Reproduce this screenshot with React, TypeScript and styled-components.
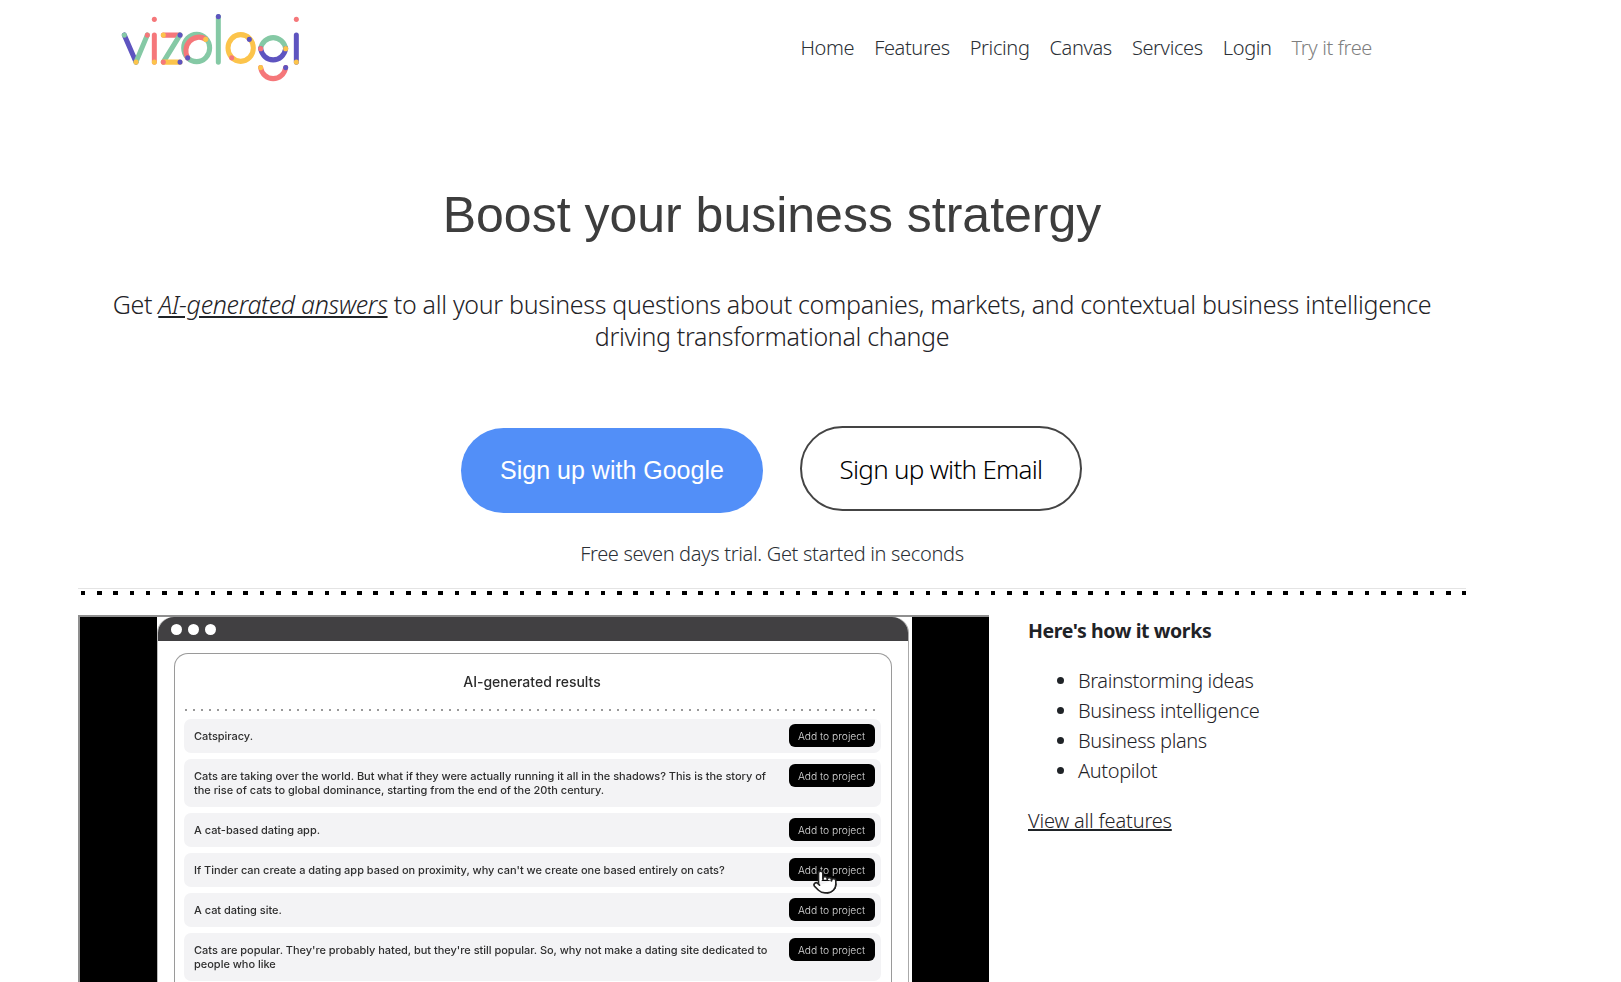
import React from "react";
import styled, { createGlobalStyle } from "styled-components";
import { Pointer } from "lucide-react";

const Global = createGlobalStyle`
  html, body { margin: 0; padding: 0; background: #fff; height: 100%; overflow: hidden; }
  body { font-family: "Noto Sans", "Open Sans", sans-serif; font-weight: 350; color: #1f2327; }
`;

const Page = styled.div`
  width: 1388px;
  margin-left: 78px;
  height: 982px;
  overflow: hidden;
  display: flex;
  flex-direction: column;
  & > * { flex: none; }
`;

const Header = styled.header`
  height: 96px;
  display: flex;
  align-items: flex-start;
  justify-content: space-between;
`;

const LogoMark = styled.svg`
  width: 220px;
  height: 105px;
  margin: -1px 0 0 22px;
  flex: none;
  filter: blur(0.4px);
`;

const Nav = styled.nav`
  display: flex;
  gap: 20px;
  margin: 34px 94px 0 0;
`;

const NavLink = styled.a<{ $muted?: boolean }>`
  font-size: 20px;
  line-height: 28px;
  letter-spacing: -0.37px;
  color: ${(p) => (p.$muted ? "#7f7f7f" : "#2b3036")};
`;

const Hero = styled.section`
  display: flex;
  flex-direction: column;
  align-items: center;
  text-align: center;
`;

const Title = styled.h1`
  margin: 90px 0 0;
  font-family: "Liberation Sans", Arial, sans-serif;
  font-weight: 400;
  font-size: 50px;
  line-height: 58px;
  color: #3d3d3d;
`;

const Lead = styled.p`
  margin: 44px 0 0;
  width: 1340px;
  font-size: 25px;
  line-height: 32px;
  letter-spacing: -0.31px;
  color: #1f2327;
  em { text-decoration: underline; }
`;

const Actions = styled.div`
  display: flex;
  align-items: flex-start;
  gap: 37px;
  margin: 74px 1px 0 0;
`;

const GoogleButton = styled.a`
  width: 302px;
  height: 85px;
  margin-top: 2px;
  border-radius: 43px;
  background: #528ff8;
  color: #fff;
  display: flex;
  align-items: center;
  justify-content: center;
  font-family: "Liberation Sans", Arial, sans-serif;
  font-size: 25px;
`;

const EmailButton = styled.a`
  width: 282px;
  height: 85px;
  box-sizing: border-box;
  border: 2px solid #444;
  border-radius: 43px;
  background: #fff;
  color: #000;
  display: flex;
  align-items: center;
  justify-content: center;
  font-size: 26px;
  letter-spacing: -0.72px;
`;

const Note = styled.p`
  margin: 28px 0 0;
  font-size: 20px;
  line-height: 26px;
  letter-spacing: -0.32px;
  color: #2b3036;
`;

const Rule = styled.div`
  height: 6px;
  margin-top: 21px;
  border-top: 1px solid #e4e4e4;
  background: repeating-linear-gradient(90deg, #000 0 4.5px, transparent 4.5px 16.25px) 3px 2px / 100% 4px no-repeat;
`;

const Columns = styled.section`
  display: flex;
  gap: 39px;
  margin-top: 20px;
`;

const Video = styled.div`
  width: 911px;
  height: 400px;
  flex: none;
  box-sizing: border-box;
  border-top: 2px solid #8f8f8f;
  border-left: 2px solid #8f8f8f;
  background: #000;
  display: flex;
  justify-content: center;
  overflow: hidden;
`;

const AppWindow = styled.div`
  width: 755px;
  background: #fff;
  padding-right: 3px;
  box-sizing: border-box;
  position: relative;
  filter: blur(0.3px);
`;

const Frame = styled.div`
  height: 100%;
  border-left: 1px solid #bbb;
  border-right: 1px solid #aaa;
  border-radius: 16px 16px 0 0;
`;

const TitleBar = styled.div`
  height: 24px;
  background: #414042;
  border-radius: 16px 16px 0 0;
  display: flex;
  align-items: center;
  gap: 6px;
  padding-left: 13px;
`;

const Dot = styled.span`
  width: 11px;
  height: 11px;
  border-radius: 50%;
  background: #fff;
`;

const Card = styled.div`
  margin: 12px 16px 0;
  border: 1.5px solid #9a9a9a;
  border-bottom: 0;
  border-radius: 14px 14px 0 0;
  padding: 0 10.5px 0 8.5px;
  height: 400px;
`;

const CardTitle = styled.div`
  font-family: Inter, sans-serif;
  font-size: 14px;
  font-weight: 500;
  color: #2b2b2b;
  text-align: center;
  line-height: 16px;
  padding-top: 20px;
`;

const CardRule = styled.div`
  height: 2px;
  margin: 19px 2px 8px 1px;
  background: repeating-linear-gradient(90deg, #999 0 2px, transparent 2px 8px);
`;

const Rows = styled.div`
  display: flex;
  flex-direction: column;
  gap: 6px;
`;

const Row = styled.div`
  min-height: 34px;
  box-sizing: border-box;
  padding: 5px 6px 5px 10.5px;
  border-radius: 7px;
  background: #f3f3f5;
  display: flex;
  justify-content: space-between;
  align-items: flex-start;
  gap: 16px;
`;

const RowText = styled.span`
  font-family: Inter, sans-serif;
  font-size: 11px;
  font-weight: 450;
  line-height: 14px;
  letter-spacing: -0.02px;
  color: #2e2e2e;
  width: 578px;
  padding: 5px 0;
`;

const AddButton = styled.span`
  flex: none;
  width: 86px;
  height: 23px;
  border-radius: 6px;
  background: #000;
  color: #ddd;
  font-family: Inter, sans-serif;
  font-size: 10.3px;
  display: flex;
  align-items: center;
  justify-content: center;
`;

const Cursor = styled(Pointer)`
  position: absolute;
  left: 655px;
  top: 252px;
  fill: #fff;
  color: #222;
`;

const Aside = styled.aside`
  color: #1f2327;
  padding-top: 2px;
`;

const AsideTitle = styled.h2`
  margin: 0;
  font-size: 19.5px;
  line-height: 28px;
  font-weight: 700;
  letter-spacing: -0.4px;
`;

const List = styled.ul`
  margin: 21px 0 0;
  padding-left: 50px;
`;

const Item = styled.li`
  font-size: 20px;
  line-height: 30px;
  letter-spacing: -0.38px;
`;

const AllLink = styled.a`
  display: inline-block;
  margin-top: 20px;
  font-size: 20px;
  line-height: 30px;
  letter-spacing: -0.17px;
  text-decoration: underline;
`;

const G = "#85c9a5", Y = "#fcc44b", R = "#f5777a", B = "#5e54c0";

const Logo = () => (
  <LogoMark viewBox="0 0 660 300" preserveAspectRatio="none" fill="none" strokeWidth="15" strokeLinecap="round">
    <path d="M73 103L108 180" stroke={B} />
    <path d="M108 180L142 103" stroke={G} />
    <path d="M163 103V180" stroke={R} />
    <path d="M190 103H240" stroke={R} />
    <path d="M240 103L190 180" stroke={G} />
    <path d="M190 180H240" stroke={Y} />
    <circle cx="290" cy="140" r="39" stroke={G} />
    <path d="M263 168A39 39 0 0 1 317 115" stroke={R} />
    <path d="M355 50V180" stroke={G} />
    <circle cx="422" cy="140" r="38" stroke={Y} />
    <path d="M482 142A38 38 0 0 1 557 142" stroke={G} />
    <path d="M482 142A38 38 0 0 0 557 142" stroke={B} />
    <path d="M482 196A38 38 0 0 0 557 196" stroke={R} />
    <path d="M589 103V180" stroke={B} />
    {([
      [73, 103, G], [108, 180, Y], [142, 103, R], [163, 58, R], [163, 180, Y],
      [190, 103, Y], [240, 103, B], [190, 180, R], [240, 180, B],
      [317, 115, Y], [263, 168, B], [355, 50, B], [448, 115, B], [395, 168, R],
      [482, 142, R], [557, 142, Y], [482, 196, Y], [557, 196, B],
      [589, 58, R], [589, 180, Y],
    ] as [number, number, string][]).map(([x, y, c]) => (
      <circle key={`${x}-${y}`} cx={x} cy={y} r="7.5" fill={c} />
    ))}
  </LogoMark>
);

const rows = [
  "Catspiracy.",
  "Cats are taking over the world. But what if they were actually running it all in the shadows? This is the story of the rise of cats to global dominance, starting from the end of the 20th century.",
  "A cat-based dating app.",
  "If Tinder can create a dating app based on proximity, why can't we create one based entirely on cats?",
  "A cat dating site.",
  "Cats are popular. They're probably hated, but they're still popular. So, why not make a dating site dedicated to people who like",
];

export default function App() {
  return (
    <Page>
      <Global />
      <Header>
        <Logo />
        <Nav>
          {["Home", "Features", "Pricing", "Canvas", "Services", "Login"].map((n) => (
            <NavLink key={n}>{n}</NavLink>
          ))}
          <NavLink $muted>Try it free</NavLink>
        </Nav>
      </Header>
      <Hero>
        <Title>Boost your business stratergy</Title>
        <Lead>
          Get <em>AI-generated answers</em> to all your business questions about companies, markets, and contextual business intelligence driving transformational change
        </Lead>
        <Actions>
          <GoogleButton>Sign up with Google</GoogleButton>
          <EmailButton>Sign up with Email</EmailButton>
        </Actions>
        <Note>Free seven days trial. Get started in seconds</Note>
      </Hero>
      <Rule />
      <Columns>
        <Video>
          <AppWindow>
            <Frame>
              <TitleBar>
                <Dot />
                <Dot />
                <Dot />
              </TitleBar>
              <Card>
                <CardTitle>AI-generated results</CardTitle>
                <CardRule />
                <Rows>
                  {rows.map((r) => (
                    <Row key={r}>
                      <RowText>{r}</RowText>
                      <AddButton>Add to project</AddButton>
                    </Row>
                  ))}
                </Rows>
              </Card>
            </Frame>
            <Cursor size={26} strokeWidth={1.5} />
          </AppWindow>
        </Video>
        <Aside>
          <AsideTitle>Here's how it works</AsideTitle>
          <List>
            <Item>Brainstorming ideas</Item>
            <Item>Business intelligence</Item>
            <Item>Business plans</Item>
            <Item>Autopilot</Item>
          </List>
          <AllLink>View all features</AllLink>
        </Aside>
      </Columns>
    </Page>
  );
}
